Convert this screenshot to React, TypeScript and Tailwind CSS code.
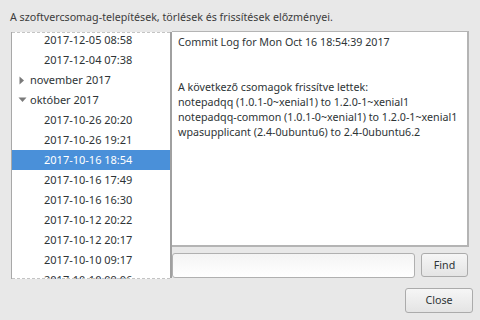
import React from "react";

const rows: { label: string; kind: "item" | "closed" | "open"; selected?: boolean }[] = [
  { label: "2017-12-05 08:58", kind: "item" },
  { label: "2017-12-04 07:38", kind: "item" },
  { label: "november 2017", kind: "closed" },
  { label: "október 2017", kind: "open" },
  { label: "2017-10-26 20:20", kind: "item" },
  { label: "2017-10-26 19:21", kind: "item" },
  { label: "2017-10-16 18:54", kind: "item", selected: true },
  { label: "2017-10-16 17:49", kind: "item" },
  { label: "2017-10-16 16:30", kind: "item" },
  { label: "2017-10-12 20:22", kind: "item" },
  { label: "2017-10-12 20:17", kind: "item" },
  { label: "2017-10-10 09:17", kind: "item" },
  { label: "2017-10-10 09:06", kind: "item" },
];

export default function App() {
  return (
    <div
      className="w-[480px] h-[320px] bg-[#e8e8e8] text-[#2e3436] flex flex-col overflow-hidden"
      style={{ fontFamily: '"Noto Sans", "Open Sans", sans-serif' }}
    >
      <div className="h-[31px] pl-[10px] pt-[9px] text-[10.7px] leading-[16px] text-[#3c3c3c] whitespace-nowrap">
        A szoftvercsomag-telepítések, törlések és frissítések előzményei.
      </div>
      <div className="flex pl-[11px] pr-[11px] h-[247px]">
        {/* tree */}
        <div className="w-[159px] shrink-0 h-[247px] mt-[1px] bg-white border-l border-[#a8a8a8] overflow-hidden relative">
          <div className="absolute left-0 right-0 top-0 border-t border-dashed border-[#c4c4c4]" />
          <div className="absolute left-0 right-0 bottom-0 border-b border-dashed border-[#c4c4c4] z-10" />
          <div className="mt-[-2px]">
            {rows.map((r) => (
              <div
                key={r.label}
                className={
                  "h-[20px] flex items-center text-[11px] whitespace-nowrap " +
                  (r.selected ? "bg-[#4a90d9] text-white" : "text-[#2e3436]")
                }
              >
                {r.kind === "item" ? (
                  <span className="pl-[32px]">{r.label}</span>
                ) : (
                  <>
                    <span className="w-[18px] pl-[6px] flex items-center">
                      {r.kind === "closed" ? (
                        <svg width="8" height="9" viewBox="0 0 8 9">
                          <path d="M1.5 0.5 L6 4.5 L1.5 8.5 Z" fill="#7a7a7a" />
                        </svg>
                      ) : (
                        <svg width="9" height="8" viewBox="0 0 9 8">
                          <path d="M0.5 1.5 L8.5 1.5 L4.5 6 Z" fill="#7a7a7a" />
                        </svg>
                      )}
                    </span>
                    <span>{r.label}</span>
                  </>
                )}
              </div>
            ))}
          </div>
        </div>
        {/* separator */}
        <div className="w-[2px] shrink-0 bg-[#a0a0a0] mt-[1px]" />
        {/* right */}
        <div className="flex-1 min-w-0 flex flex-col">
          <div className="h-[216px] bg-white border-t border-r-2 border-b-2 border-[#b4b4b4] pl-[6px] pt-[3px] text-[10.7px] leading-[15px] text-[#2e3436] whitespace-nowrap overflow-hidden">
            <div>Commit Log for Mon Oct 16 18:54:39 2017</div>
            <div className="h-[15px]" />
            <div className="h-[15px]" />
            <div>A következő csomagok frissítve lettek:</div>
            <div>notepadqq (1.0.1-0~xenial1) to 1.2.0-1~xenial1</div>
            <div>notepadqq-common (1.0.1-0~xenial1) to 1.2.0-1~xenial1</div>
            <div>wpasupplicant (2.4-0ubuntu6) to 2.4-0ubuntu6.2</div>
          </div>
          <div className="flex mt-[6px] gap-[6px] h-[25px]">
            <div className="w-[243px] h-[25px] rounded-[3px] border border-[#b0b0b0] bg-gradient-to-b from-[#f4f4f4] to-white" />
            <button className="w-[47px] h-[24px] rounded-[3px] border border-[#ababab] bg-gradient-to-b from-[#f6f6f6] to-[#e4e4e4] text-[10.7px] text-[#2e3436]">
              Find
            </button>
          </div>
        </div>
      </div>
      <div className="flex justify-end pr-[7px] mt-[10px]">
        <button className="w-[68px] h-[25px] rounded-[3px] border border-[#ababab] bg-gradient-to-b from-[#f6f6f6] to-[#e4e4e4] text-[10.7px] text-[#2e3436]">
          Close
        </button>
      </div>
    </div>
  );
}
